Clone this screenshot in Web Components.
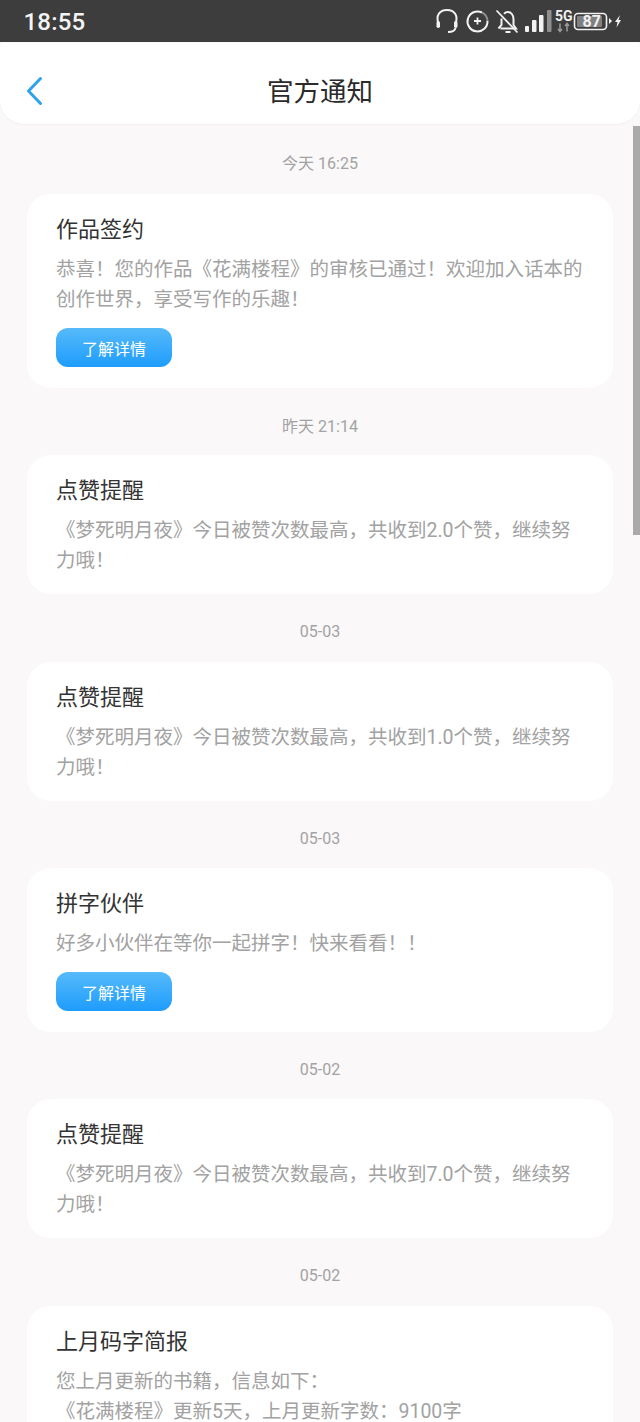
<!DOCTYPE html>
<html lang="zh">
<head>
<meta charset="utf-8">
<title>官方通知</title>
<style>
    html, body { margin: 0; padding: 0; }
    body {
        width: 640px;
        height: 1422px;
        overflow: hidden;
        background: #faf8f9;
        font-family: Roboto, "Noto Sans CJK SC", sans-serif;
    }
</style>
</head>
<body>
<notice-page>
    <status-bar slot="top"></status-bar>
    <nav-header slot="top">官方通知</nav-header>

    <date-label>今天 16:25</date-label>
    <notice-card heading="作品签约" action="了解详情">恭喜&#xFF01;您的作品《花满楼程》的审核已通过&#xFF01;欢迎加入话本的创作世界&#xFF0C;享受写作的乐趣&#xFF01;</notice-card>

    <date-label>昨天 21:14</date-label>
    <notice-card heading="点赞提醒">《梦死明月夜》今日被赞次数最高&#xFF0C;共收到2.0个赞&#xFF0C;继续努力哦&#xFF01;</notice-card>

    <date-label>05-03</date-label>
    <notice-card heading="点赞提醒">《梦死明月夜》今日被赞次数最高&#xFF0C;共收到1.0个赞&#xFF0C;继续努力哦&#xFF01;</notice-card>

    <date-label>05-03</date-label>
    <notice-card heading="拼字伙伴" action="了解详情">好多小伙伴在等你一起拼字&#xFF01;快来看看&#xFF01;&#xFF01;</notice-card>

    <date-label>05-02</date-label>
    <notice-card heading="点赞提醒">《梦死明月夜》今日被赞次数最高&#xFF0C;共收到7.0个赞&#xFF0C;继续努力哦&#xFF01;</notice-card>

    <date-label>05-02</date-label>
    <notice-card heading="上月码字简报">您上月更新的书籍&#xFF0C;信息如下&#xFF1A;<br>《花满楼程》更新5天&#xFF0C;上月更新字数&#xFF1A;9100字</notice-card>
</notice-page>

<script>
class NoticePage extends HTMLElement {
    constructor() {
        super();
        this.attachShadow({ mode: 'open' });
        this.shadowRoot.innerHTML = `
            <style>
                :host {
                    display: flex;
                    flex-direction: column;
                    position: relative;
                    width: 640px;
                    height: 1422px;
                    overflow: hidden;
                }
                .list {
                    flex: 1;
                    min-height: 0;
                    overflow: hidden;
                    display: flex;
                    flex-direction: column;
                    padding: 0 27px;
                }
                ::slotted(date-label:first-of-type) {
                    margin-bottom: 2.500px;
                }
                .thumb {
                    position: absolute;
                    top: 126px;
                    right: 0;
                    width: 7px;
                    height: 409px;
                    background: #aaaaaa;
                }
            </style>
            <slot name="top"></slot>
            <div class="list"><slot></slot></div>
            <div class="thumb"></div>
        `;
    }
}

class StatusBar extends HTMLElement {
    constructor() {
        super();
        this.attachShadow({ mode: 'open' });
        this.shadowRoot.innerHTML = `
            <style>
                :host {
                    display: flex;
                    align-items: center;
                    justify-content: space-between;
                    flex: none;
                    height: 42px;
                    padding: 0 16px 0 23.500px;
                    background: #3d3d3d;
                    color: #f4f4f4;
                    font-family: Roboto, sans-serif;
                }
                .time {
                    position: relative;
                    top: 1px;
                    font-size: 24px;
                    font-weight: 500;
                    letter-spacing: 0.200px;
                }
                svg { display: block; }
                .batt-num {
                    font-size: 16px;
                    font-weight: 700;
                    fill: #f0f0f0;
                    font-family: Roboto, sans-serif;
                }
                .five-g {
                    font-size: 14px;
                    font-weight: 700;
                    fill: #f0f0f0;
                    font-family: Roboto, sans-serif;
                }
            </style>
            <span class="time">18:55</span>
            <svg width="204" height="42" viewBox="0 0 204 42" fill="none" stroke="#f2f2f2" stroke-width="2">
                <!-- headset -->
                <path d="M18.500 24C15.500 15.500 19.500 10 27 10s11.500 5.500 8.500 14"/>
                <rect x="16.500" y="21" width="3.500" height="7" rx="1.700" fill="#f2f2f2" stroke="none"/>
                <rect x="34" y="21" width="3.500" height="7" rx="1.700" fill="#f2f2f2" stroke="none"/>
                <path d="M35.500 28c-.5 2.500-3 4-7.500 4"/>
                <!-- data saver -->
                <path d="M62 12.500a10 10 0 1 0 5.500 8.500"/>
                <path d="M62 12.500a10 10 0 0 1 5.500 8.500" stroke="#8f8f8f"/>
                <path d="M57.500 17.500v7M54 21h7" stroke-width="1.800"/>
                <!-- muted bell -->
                <path d="M80.500 28.500h15.500l-2.500-3.500v-6c0-4-2.500-7-5.500-7-1.500 0-3 .6-4 1.800M81.500 18.500v6.500l-3 3.500"/>
                <path d="M85.500 32h5"/>
                <path d="M76.500 10.500l21 22" stroke-width="1.800"/>
                <!-- signal -->
                <g stroke="none">
                    <rect x="105" y="26" width="4" height="6" rx="1" fill="#f2f2f2"/>
                    <rect x="112" y="20" width="4.500" height="12" rx="1" fill="#f2f2f2"/>
                    <rect x="119" y="15" width="4.500" height="17" rx="1" fill="#f2f2f2"/>
                    <rect x="127" y="10" width="4.500" height="22" rx="1" fill="#8f8f8f"/>
                </g>
                <!-- 5G -->
                <text class="five-g" x="135" y="21" stroke="none">5G</text>
                <path d="M140 23.500v8M138 29l2 2.500 2-2.500M147 31.500v-8M145 26l2-2.500 2 2.500" stroke="#9a9a9a" stroke-width="1.500"/>
                <!-- battery -->
                <rect x="154.500" y="13.500" width="32" height="16" rx="3.500" stroke-width="1.600"/>
                <rect x="157" y="16" width="25" height="11" rx="1" fill="#808080" stroke="none"/>
                <text class="batt-num" x="162.500" y="27" stroke="none">87</text>
                <path d="M189 18l3 3-3 3z" fill="#f2f2f2" stroke="none"/>
                <path d="M200 15l-5 7h2.500l-1 5.500 4.500-7.500h-2.500z" fill="#f2f2f2" stroke="none"/>
            </svg>
        `;
    }
}

class NavHeader extends HTMLElement {
    constructor() {
        super();
        this.attachShadow({ mode: 'open' });
        this.shadowRoot.innerHTML = `
            <style>
                :host {
                    display: flex;
                    align-items: center;
                    justify-content: center;
                    position: relative;
                    flex: none;
                    height: 81px;
                    margin-top: 1px;
                    background: #ffffff;
                    border-radius: 4px 4px 24px 24px;
                    box-shadow: 0 1px 2px rgba(0, 0, 0, 0.04);
                    color: #2b2b2b;
                    font-family: "Noto Sans CJK SC", sans-serif;
                    font-size: 26.500px;
                }
                svg {
                    position: absolute;
                    left: 24px;
                    top: 31px;
                }
                .title { position: relative; top: 6px; }
            </style>
            <svg width="20" height="34" viewBox="0 0 20 34" fill="none" stroke="#2ea3ec" stroke-width="3" stroke-linecap="round" stroke-linejoin="round">
                <path d="M16.500 4.500 4.500 17l12 12.500"/>
            </svg>
            <span class="title"><slot></slot></span>
        `;
    }
}

class DateLabel extends HTMLElement {
    constructor() {
        super();
        this.attachShadow({ mode: 'open' });
        this.shadowRoot.innerHTML = `
            <style>
                :host {
                    display: flex;
                    align-items: center;
                    justify-content: center;
                    flex: none;
                    height: 20px;
                    padding: 27.500px 0 20px;
                    color: #a3a3a3;
                    font-family: Roboto, "Noto Sans CJK SC", sans-serif;
                    font-size: 16px;
                }
            </style>
            <slot></slot>
        `;
    }
}

class NoticeCard extends HTMLElement {
    constructor() {
        super();
        this.attachShadow({ mode: 'open' });
        const action = this.getAttribute('action');
        this.shadowRoot.innerHTML = `
            <style>
                :host {
                    display: flex;
                    flex-direction: column;
                    align-items: flex-start;
                    flex: none;
                    box-sizing: border-box;
                    padding: 21px 28px 18px 29px;
                    background: #ffffff;
                    border-radius: 24px;
                    font-family: Roboto, "Noto Sans CJK SC", sans-serif;
                }
                .heading {
                    height: 30px;
                    line-height: 30px;
                    margin-bottom: 10px;
                    color: #333333;
                    font-size: 22px;
                }
                .body {
                    line-height: 30px;
                    color: #a2a2a2;
                    font-size: 19.500px;
                }
                .action {
                    box-sizing: border-box;
                    width: 116px;
                    height: 39px;
                    margin: 13px 0 2.500px;
                    display: flex;
                    align-items: center;
                    justify-content: center;
                    border-radius: 12px;
                    background: linear-gradient(#56baf9, #1e9cfd);
                    color: #ffffff;
                    font-size: 16px;
                }
            </style>
            <div class="heading">${this.getAttribute('heading')}</div>
            <div class="body"><slot></slot></div>
            ${action ? `<div class="action">${action}</div>` : ''}
        `;
    }
}

customElements.define('notice-page', NoticePage);
customElements.define('status-bar', StatusBar);
customElements.define('nav-header', NavHeader);
customElements.define('date-label', DateLabel);
customElements.define('notice-card', NoticeCard);
</script>
</body>
</html>
